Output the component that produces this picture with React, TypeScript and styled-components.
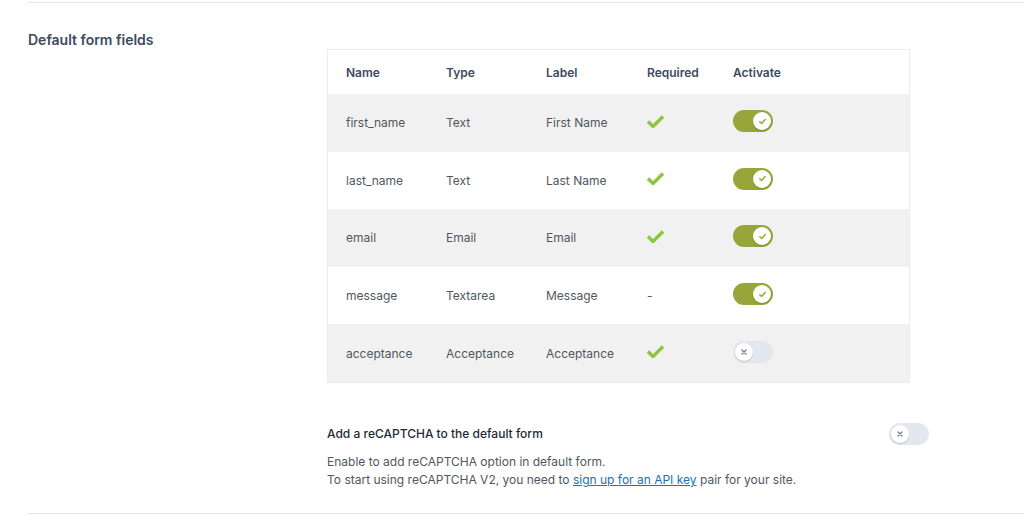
import React from "react";
import styled, { createGlobalStyle } from "styled-components";

const Global = createGlobalStyle`
  body { margin: 0; background: #fff; font-family: Inter, "Noto Sans", sans-serif; color: #50575e; }
`;

const Page = styled.div`
  margin-left: 28px;
  border-top: 1px solid #e5e7eb;
  border-bottom: 1px solid #e5e7eb;
  margin-top: 2px;
  height: 512px;
  box-sizing: border-box;
  display: grid;
  grid-template-columns: 299px 1fr;
`;

const Title = styled.h2`
  margin: 28px 0 0;
  font-size: 14px;
  font-weight: 600;
  color: #3c4a5e;
`;

const Main = styled.div`
  padding-top: 46px;
`;

const Table = styled.div`
  width: 583px;
  border: 1px solid #ececec;
  box-sizing: border-box;
`;

const Row = styled.div<{ $shade?: boolean; $head?: boolean }>`
  display: grid;
  grid-template-columns: 100px 100px 101px 86px 1fr;
  align-items: center;
  padding-left: 18px;
  height: ${(p) => (p.$head ? "44px" : "57.6px")};
  background: ${(p) => (p.$shade ? "#f1f1f1" : "#fff")};
  font-size: 12px;
  font-weight: ${(p) => (p.$head ? 600 : 400)};
  color: ${(p) => (p.$head ? "#3c4a5e" : "#50575e")};
`;

const Toggle = styled.span<{ $on: boolean }>`
  position: relative;
  display: inline-block;
  width: 40px;
  height: 22px;
  border-radius: 11px;
  background: ${(p) => (p.$on ? "#97a53a" : "#e3e7ee")};
`;

const Knob = styled.span<{ $on: boolean }>`
  position: absolute;
  top: 2px;
  left: ${(p) => (p.$on ? "20px" : "2px")};
  width: 18px;
  height: 18px;
  border-radius: 50%;
  background: #fff;
  box-shadow: 0 1px 2px rgba(0,0,0,.15);
  display: flex;
  align-items: center;
  justify-content: center;
`;

const Switch = ({ on }: { on: boolean }) => (
  <Toggle $on={on}>
    <Knob $on={on}>
      {on ? (
        <svg width="9" height="9" viewBox="0 0 10 10"><path d="M2 5.2l2 2 4-4.4" fill="none" stroke="#97a53a" strokeWidth="1.6" strokeLinecap="round" strokeLinejoin="round"/></svg>
      ) : (
        <svg width="8" height="8" viewBox="0 0 10 10"><path d="M2.5 2.5l5 5M7.5 2.5l-5 5" stroke="#7b8597" strokeWidth="1.8" strokeLinecap="round"/></svg>
      )}
    </Knob>
  </Toggle>
);

const Check = () => (
  <svg width="17" height="13" viewBox="0 0 17 13"><path d="M1 6.5l5 5L16 1.5" fill="none" stroke="#8cc63f" strokeWidth="3.4" strokeLinejoin="miter"/></svg>
);

const Recaptcha = styled.div`
  margin-top: 40px;
  width: 602px;
`;

const RecHead = styled.div`
  display: flex;
  justify-content: space-between;
  align-items: center;
  font-size: 12px;
  font-weight: 500;
  color: #1e2a3b;
`;

const Desc = styled.p`
  margin: 8px 0 0;
  font-size: 12px;
  line-height: 18px;
  color: #50575e;
  a { color: #2271b1; }
`;

const rows = [
  ["first_name", "Text", "First Name", true, true],
  ["last_name", "Text", "Last Name", true, true],
  ["email", "Email", "Email", true, true],
  ["message", "Textarea", "Message", false, true],
  ["acceptance", "Acceptance", "Acceptance", true, false],
] as const;

export default function App() {
  return (
    <>
      <Global />
      <Page>
        <Title>Default form fields</Title>
        <Main>
          <Table>
            <Row $head>
              <span>Name</span><span>Type</span><span>Label</span><span>Required</span><span>Activate</span>
            </Row>
            {rows.map((r, i) => (
              <Row key={r[0]} $shade={i % 2 === 0}>
                <span>{r[0]}</span>
                <span>{r[1]}</span>
                <span>{r[2]}</span>
                <span>{r[3] ? <Check /> : "-"}</span>
                <span><Switch on={r[4]} /></span>
              </Row>
            ))}
          </Table>
          <Recaptcha>
            <RecHead>
              <span>Add a reCAPTCHA to the default form</span>
              <Switch on={false} />
            </RecHead>
            <Desc>
              Enable to add reCAPTCHA option in default form.<br />
              To start using reCAPTCHA V2, you need to <a href="#">sign up for an API key</a> pair for your site.
            </Desc>
          </Recaptcha>
        </Main>
      </Page>
    </>
  );
}
